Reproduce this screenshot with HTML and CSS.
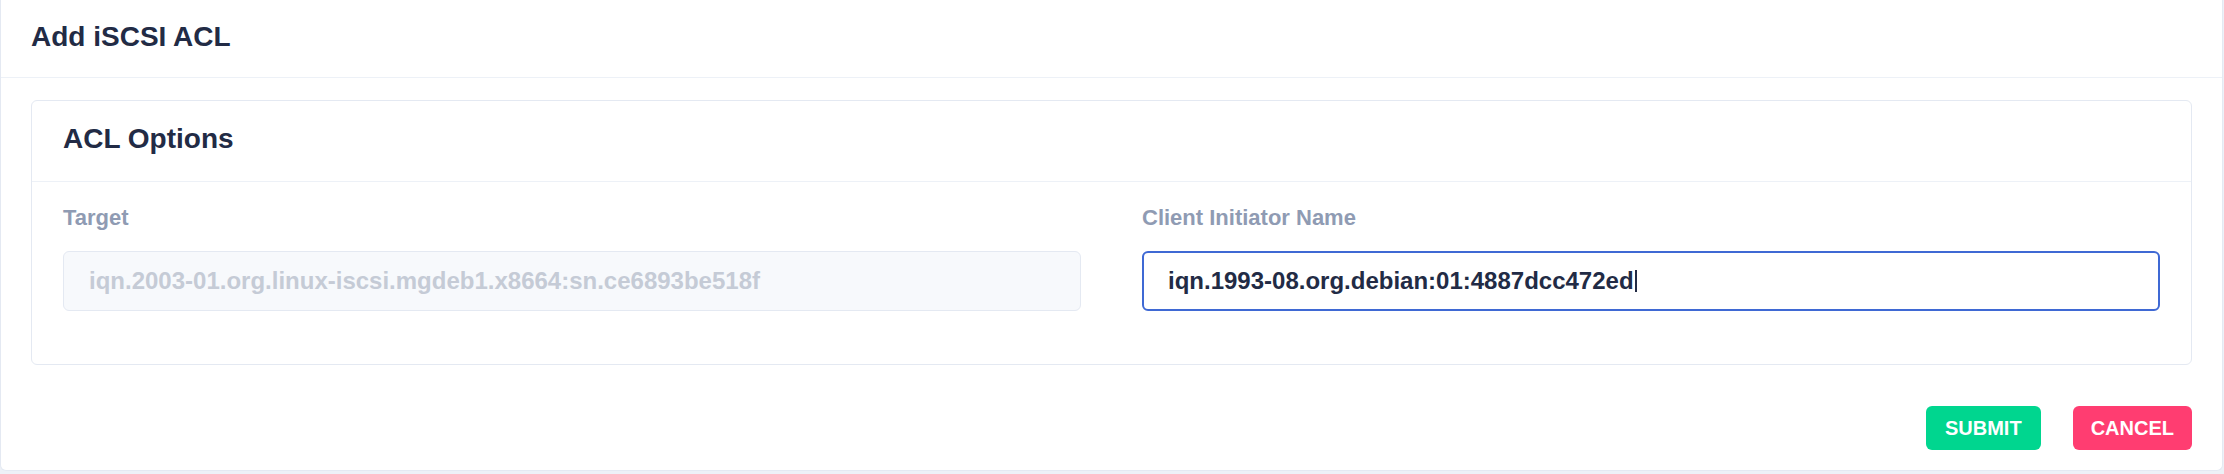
FILE: index.html
```html
<!DOCTYPE html>
<html lang="en">
<head>
<meta charset="utf-8">
<title>Add iSCSI ACL</title>
<link rel="stylesheet" href="styles.css">
</head>
<body>
  <div class="dialog">
    <div class="dialog-header">
      <h1 class="dialog-title">Add iSCSI ACL</h1>
    </div>
    <div class="dialog-body">
      <section class="panel">
        <div class="panel-header">
          <h2 class="panel-title">ACL Options</h2>
        </div>
        <div class="panel-body">
          <div class="field">
            <label class="field-label">Target</label>
            <div class="input input-disabled">iqn.2003-01.org.linux-iscsi.mgdeb1.x8664:sn.ce6893be518f</div>
          </div>
          <div class="field">
            <label class="field-label">Client Initiator Name</label>
            <div class="input input-focused">iqn.1993-08.org.debian:01:4887dcc472ed<span class="caret"></span></div>
          </div>
        </div>
      </section>
    </div>
    <div class="dialog-footer">
      <button class="btn btn-success">SUBMIT</button>
      <button class="btn btn-danger">CANCEL</button>
    </div>
  </div>
</body>
</html>
```

FILE: styles.css
```css
* {
  box-sizing: border-box;
}

html, body {
  margin: 0;
  padding: 0;
}

body {
  background: #edf1f7;
  font-family: "Liberation Sans", Arial, sans-serif;
  color: #222b45;
  width: 2224px;
  height: 474px;
  overflow: hidden;
}

.dialog {
  width: 2223px;
  background: #ffffff;
  border: 1px solid #e4e9f2;
  border-top: none;
  border-radius: 0 0 6px 6px;
}

.dialog-header {
  height: 78px;
  padding: 19px 30px 0;
  border-bottom: 1px solid #edf1f7;
}

.dialog-title {
  margin: 0;
  font-size: 28px;
  line-height: 35px;
  font-weight: 700;
  color: #222b45;
}

.dialog-body {
  padding: 22px 30px 0;
}

.panel {
  border: 1px solid #e4e9f2;
  border-radius: 6px;
  background: #ffffff;
}

.panel-header {
  height: 81px;
  padding: 21px 31px 0;
  border-bottom: 1px solid #edf1f7;
}

.panel-title {
  margin: 0;
  font-size: 28px;
  line-height: 34px;
  font-weight: 700;
  color: #222b45;
}

.panel-body {
  display: grid;
  grid-template-columns: 1fr 1fr;
  column-gap: 61px;
  padding: 22px 31px 53px;
}

.field {
  display: flex;
  flex-direction: column;
  gap: 20px;
}

.field-label {
  font-size: 22px;
  line-height: 27px;
  font-weight: 700;
  color: #8f9bb3;
}

.input {
  height: 60px;
  border-radius: 6px;
  padding: 0 25px;
  display: flex;
  align-items: center;
  font-size: 24px;
  font-weight: 700;
  white-space: nowrap;
  overflow: hidden;
}

.input-disabled {
  background: #f7f9fc;
  border: 1px solid #e4e9f2;
  color: #c5cbd6;
}

.input-focused {
  background: #ffffff;
  border: 2px solid #3f69d4;
  color: #222b45;
  padding-left: 24px;
}

.caret {
  display: inline-block;
  width: 2px;
  height: 22px;
  margin-left: 1px;
  background: #222b45;
}

.dialog-footer {
  display: flex;
  justify-content: flex-end;
  gap: 32px;
  padding: 41px 30px 20px;
}

.btn {
  height: 44px;
  padding: 0 18px;
  border: none;
  border-radius: 6px;
  font-family: "Liberation Sans", Arial, sans-serif;
  font-size: 20px;
  font-weight: 700;
  color: #ffffff;
  cursor: pointer;
}

.btn-success {
  background: #00d68f;
  padding: 0 19px;
}

.btn-danger {
  background: #ff3d71;
}
```
